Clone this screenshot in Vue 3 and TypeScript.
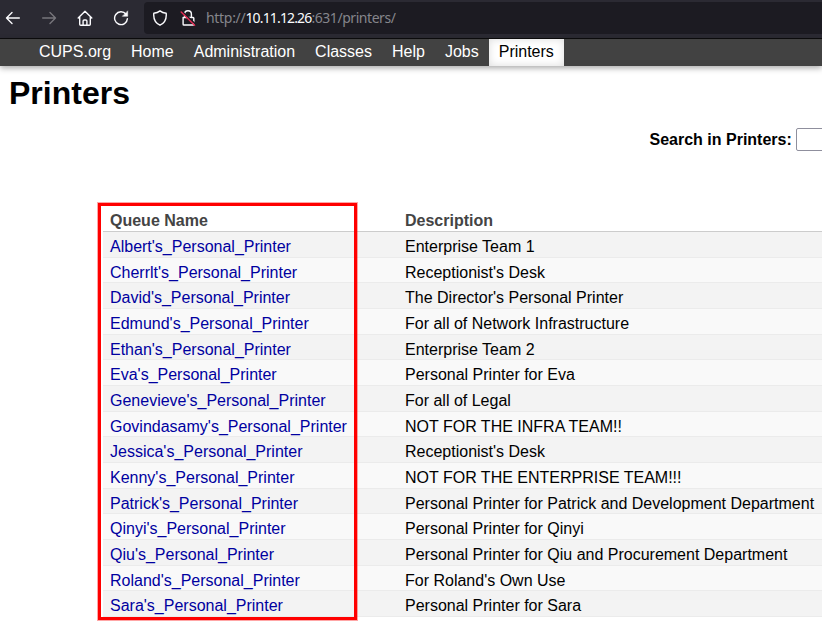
<script setup lang="ts">
interface Printer {
  name: string
  description: string
}

const tabs: string[] = ['CUPS.org', 'Home', 'Administration', 'Classes', 'Help', 'Jobs', 'Printers']
const activeTab = 'Printers'

const printers: Printer[] = [
  { name: "Albert's_Personal_Printer", description: 'Enterprise Team 1' },
  { name: "Cherrlt's_Personal_Printer", description: "Receptionist's Desk" },
  { name: "David's_Personal_Printer", description: "The Director's Personal Printer" },
  { name: "Edmund's_Personal_Printer", description: 'For all of Network Infrastructure' },
  { name: "Ethan's_Personal_Printer", description: 'Enterprise Team 2' },
  { name: "Eva's_Personal_Printer", description: 'Personal Printer for Eva' },
  { name: "Genevieve's_Personal_Printer", description: 'For all of Legal' },
  { name: "Govindasamy's_Personal_Printer", description: 'NOT FOR THE INFRA TEAM!!' },
  { name: "Jessica's_Personal_Printer", description: "Receptionist's Desk" },
  { name: "Kenny's_Personal_Printer", description: 'NOT FOR THE ENTERPRISE TEAM!!!' },
  { name: "Patrick's_Personal_Printer", description: 'Personal Printer for Patrick and Development Department' },
  { name: "Qinyi's_Personal_Printer", description: 'Personal Printer for Qinyi' },
  { name: "Qiu's_Personal_Printer", description: 'Personal Printer for Qiu and Procurement Department' },
  { name: "Roland's_Personal_Printer", description: "For Roland's Own Use" },
  { name: "Sara's_Personal_Printer", description: 'Personal Printer for Sara' },
]
</script>

<template>
  <div class="window">
    <header class="toolbar">
      <div class="buttons">
        <svg class="icon" viewBox="0 0 16 16"><path d="M14.3 8H1.5M7 2.6 1.5 8 7 13.4" /></svg>
        <svg class="icon dim" viewBox="0 0 16 16"><path d="M1.7 8h12.8M9 2.6 14.5 8 9 13.4" /></svg>
        <svg class="icon" viewBox="0 0 16 16">
          <path d="M1.2 8.1 8 1.3l6.8 6.8M2.7 6.8v7.4q0 1 1 1h8.6q1 0 1-1V6.8M6.1 15v-4q0-1 1-1h1.8q1 0 1 1v4" />
        </svg>
        <svg class="icon" viewBox="0 0 16 16">
          <path d="M13 4.2A6.4 6.4 0 1 0 14.4 8.6" />
          <path class="solid" d="M14.7 1.2v5.1H9.6z" />
        </svg>
      </div>
      <div class="address">
        <svg class="icon" viewBox="0 0 16 16">
          <path d="M8 .9Q10.4 2.9 14.2 3.3C14.7 8.9 12.6 13 8 15.2 3.4 13 1.3 8.9 1.8 3.3 5.6 2.9 8 .9 8 .9z" />
        </svg>
        <svg class="icon lock" viewBox="0 0 16 16">
          <path d="M4.6 7V4.1a3.4 3.4 0 0 1 6.8 0V7M3.1 7.5h9.9q.8 0 .8.8v5.9q0 .8-.8.8H3.9q-.8 0-.8-.8z" />
          <path class="gap" d="M2.8 2.2 15.6 14.2" />
          <path class="slash" d="M1.2 2.1 14.6 15.2" />
        </svg>
        <span class="url">http://<b>10.11.12.26</b><span class="path">:631/printers/</span></span>
      </div>
    </header>

    <nav class="tabs">
      <a v-for="tab in tabs" :key="tab" class="tab" :class="{ active: tab === activeTab }">{{ tab }}</a>
    </nav>

    <main>
      <h1>Printers</h1>
      <div class="search">
        <label for="query">Search in Printers:</label>
        <input id="query" type="text" />
      </div>

      <section class="list">
        <div class="row head"><span>Queue Name</span><span>Description</span></div>
        <div v-for="printer in printers" :key="printer.name" class="row">
          <a>{{ printer.name }}</a><span>{{ printer.description }}</span>
        </div>
        <div class="highlight"></div>
      </section>
    </main>
  </div>
</template>

<style>
body {
  margin: 0;
  overflow: hidden;
}
</style>

<style scoped>
.window {
  width: 822px;
  height: 630px;
  overflow: hidden;
  background: #fff;
  color: #000;
  font: 16px/19px "Liberation Sans", Arial, sans-serif;
}
.toolbar {
  box-sizing: border-box;
  display: flex;
  height: 39px;
  padding-top: 2px;
  background: #2b2a33;
  border-bottom: 1px solid #0c0c0d;
}
.buttons {
  display: flex;
  align-items: center;
  flex: none;
  gap: 20px;
  width: 139px;
  height: 32px;
  padding-left: 5px;
}
.icon {
  flex: none;
  width: 16px;
  height: 16px;
  fill: none;
  stroke: #fbfbfe;
  stroke-width: 1.4;
  stroke-linecap: round;
  stroke-linejoin: round;
}
.dim {
  stroke: #77767c;
}
.solid {
  fill: #fbfbfe;
  stroke-width: 0.5;
}
.address {
  display: flex;
  align-items: center;
  flex: 1;
  height: 32px;
  padding-left: 8px;
  border-radius: 4px 0 0 4px;
  background: #1c1b22;
}
.lock {
  margin-left: 12px;
}
.gap {
  stroke: #1c1b22;
  stroke-width: 1.6;
}
.slash {
  stroke: #e22850;
}
.url {
  margin-left: 10px;
  color: #85858b;
  font: 14px/20px "Noto Sans", sans-serif;
  letter-spacing: -0.3px;
  white-space: nowrap;
}
.url b {
  color: #fbfbfe;
  font-weight: 400;
  letter-spacing: -0.85px;
}
.path {
  letter-spacing: -0.45px;
}
.tabs {
  display: flex;
  height: 27px;
  padding-left: 29px;
  background: #424242;
  box-shadow: 0 2px 6px rgba(0, 0, 0, 0.35);
}
.tab {
  height: 27px;
  padding: 0 10px;
  color: #fff;
  line-height: 25px;
}
.active {
  background: #fff;
  box-shadow: inset 0 0 8px rgba(0, 0, 0, 0.14);
  color: #000;
}
h1 {
  margin: 0;
  padding: 7px 0 0 9px;
  font-size: 32px;
  line-height: 40px;
}
.search {
  display: flex;
  align-items: center;
  height: 24px;
  margin-top: 14px;
  padding-left: 649.5px;
  font-weight: 700;
}
.search label {
  flex: none;
  width: 146.5px;
}
.search input {
  box-sizing: border-box;
  flex: none;
  width: 190px;
  height: 23px;
  margin: 0;
  padding: 0 4px;
  border: 1px solid #8f8f9d;
  border-radius: 2px;
  background: #fff;
}
.list {
  position: relative;
  margin: 55px 0 0 103px;
}
.row {
  box-sizing: border-box;
  display: grid;
  grid-template-columns: 295px 1fr;
  height: 25.667px;
  padding: 5px 0 0 7px;
  border-bottom: 1px solid #ebebeb;
  background: #f9f9f9;
  line-height: 20px;
  white-space: nowrap;
}
.row:nth-child(even) {
  background: #f3f3f3;
}
.row.head {
  height: 26px;
  background: #fff;
  border-color: #ccc;
  color: #444;
  font-weight: 700;
}
.row a {
  color: #0000a0;
}
.highlight {
  position: absolute;
  top: -3px;
  left: -5px;
  box-sizing: border-box;
  width: 259px;
  height: 417px;
  border: 3px solid #f00;
  box-shadow: 0 0 0 1px rgba(255, 0, 0, 0.35);
}
</style>
